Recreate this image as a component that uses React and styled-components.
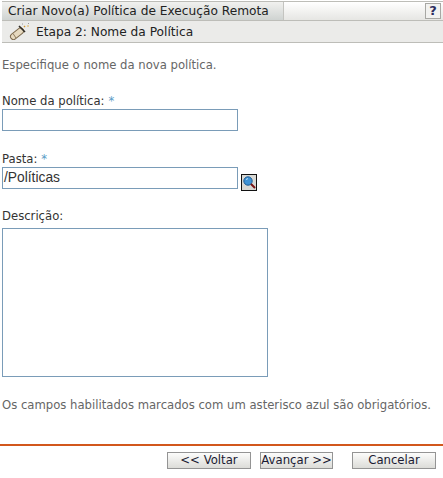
import React from 'react'
import styled, { createGlobalStyle } from 'styled-components'

const Global = createGlobalStyle`
  html, body { margin: 0; padding: 0; background: #fff; }
  body { font-family: "DejaVu Sans", Verdana, sans-serif; font-size: 11.65px; color: #333; }
`

const Page = styled.div`
  width: 443px;
  height: 478px;
  padding-top: 1px;
  box-sizing: border-box;
  overflow: hidden;
`

const Header = styled.div`
  margin: 0 0 0 2px;
  border-top: 1px solid #bdbdb8;
  border-bottom: 1px solid #bdbdb8;
`

const TabRow = styled.div`
  display: flex;
  height: 18px;
  border-bottom: 1px solid #bdbdb8;
  background: linear-gradient(#fff, #e6e6e3);
`

const Tab = styled.div`
  width: 282px;
  padding-left: 6px;
  box-sizing: border-box;
  font-size: 12.2px;
  line-height: 18px;
  color: #222;
  white-space: nowrap;
  background: linear-gradient(#f1f1ef, #cfd3d1);
  border-right: 1px solid #c4c4c0;
`

const HelpCell = styled.div`
  flex: 1;
  display: flex;
  justify-content: flex-end;
  align-items: center;
  padding-right: 2px;
`

const HelpButton = styled.div`
  width: 14px;
  height: 14px;
  border: 1px solid #a8a8a4;
  background: #f2f2f0;
  color: #2c2c5e;
  font: bold 13px/14px "DejaVu Sans", sans-serif;
  text-align: center;
`

const StepRow = styled.div`
  display: flex;
  align-items: center;
  gap: 5px;
  height: 21px;
  padding-left: 7px;
  background: #ebebe9;
  font-size: 12.2px;
  color: #222;
`

const Content = styled.div`
  padding: 15px 0 0 2px;
`

const Intro = styled.p`
  margin: 0 0 22px;
  line-height: 14px;
  color: #666;
`

const Field = styled.div`
  margin-bottom: ${p => p.$gap}px;
`

const Label = styled.div`
  line-height: 14px;
  margin-bottom: ${p => p.$gap || 1}px;
  color: #333;
`

const Star = styled.span`
  color: #5a9cc6;
  margin-left: 4px;
`

const InputRow = styled.div`
  display: flex;
  align-items: flex-end;
  gap: 3px;
`

const TextInput = styled.div`
  width: 236px;
  height: 22px;
  box-sizing: border-box;
  border: 1px solid #7a9cb8;
  padding-left: 1px;
  font: 13.8px/20px "Liberation Sans", Arial, sans-serif;
  color: #333;
`

const TextArea = styled.div`
  width: 266px;
  height: 149px;
  box-sizing: border-box;
  border: 1px solid #7a9cb8;
`

const SearchButton = styled.div`
  width: 16px;
  height: 17px;
  margin-bottom: -2px;
  box-sizing: border-box;
  border: 1px solid #111;
  background: #d8d8d4;
  display: flex;
`

const Note = styled.p`
  margin: 21px 0 0;
  line-height: 14px;
  color: #666;
  white-space: nowrap;
`

const Footer = styled.div`
  margin: 32px 0 0;
  border-top: 2px solid #d2571c;
  display: flex;
  padding: 6px 0 0 167px;
`

const Button = styled.button`
  height: 17px;
  width: ${p => p.$w}px;
  margin-right: ${p => p.$gap || 0}px;
  padding: 0;
  border: 1px solid #949494;
  border-radius: 0;
  background: linear-gradient(#fcfcfb, #dcdcd8);
  font: 11.7px/15px "DejaVu Sans", sans-serif;
  color: #1b1b33;
  white-space: nowrap;
`

const ScrollIcon = () => (
  <svg width="22" height="17" viewBox="0 0 22 17">
    <path d="M4.5 13.5 L11.5 8" stroke="#7d6a4e" strokeWidth="7" strokeLinecap="round" />
    <path d="M4.5 13.5 L11.5 8" stroke="#e6d9bf" strokeWidth="5" strokeLinecap="round" />
    <path d="M4 10.5 L7 15" stroke="#8d7a5c" strokeWidth="1" />
    <path d="M10 3 L16 9" stroke="#2f2a24" strokeWidth="1.6" />
    <path d="M15 4 L16 3" stroke="#d4982c" strokeWidth="1.4" />
    <path d="M18 3 L20 3" stroke="#e0b45a" strokeWidth="1" />
    <path d="M13 1 L14 1 M19 0.5 L20 0.5" stroke="#9a9a9a" strokeWidth="1" />
  </svg>
)

const SearchIcon = () => (
  <svg width="14" height="15" viewBox="0 0 14 15">
    <circle cx="6" cy="6" r="4.2" fill="#3f93d6" stroke="#1f5c93" strokeWidth="1" />
    <path d="M4 4.5 L6 3.6" stroke="#bfe2f8" strokeWidth="1" />
    <path d="M9 9 L13 13" stroke="#7a1212" strokeWidth="2" />
  </svg>
)

export default function App() {
  return (
    <Page>
      <Global />
      <Header>
        <TabRow>
          <Tab>Criar Novo(a) Política de Execução Remota</Tab>
          <HelpCell><HelpButton>?</HelpButton></HelpCell>
        </TabRow>
        <StepRow>
          <ScrollIcon />
          <span>Etapa 2: Nome da Política</span>
        </StepRow>
      </Header>
      <Content>
        <Intro>Especifique o nome da nova política.</Intro>
        <Field $gap={21}>
          <Label>Nome da política:<Star>*</Star></Label>
          <InputRow><TextInput /></InputRow>
        </Field>
        <Field $gap={20}>
          <Label>Pasta:<Star>*</Star></Label>
          <InputRow>
            <TextInput>/Políticas</TextInput>
            <SearchButton><SearchIcon /></SearchButton>
          </InputRow>
        </Field>
        <Field $gap={0}>
          <Label $gap={5}>Descrição:</Label>
          <TextArea />
        </Field>
        <Note>Os campos habilitados marcados com um asterisco azul são obrigatórios.</Note>
      </Content>
      <Footer>
        <Button $w={84} $gap={9}>&lt;&lt; Voltar</Button>
        <Button $w={73} $gap={19}>Avançar &gt;&gt;</Button>
        <Button $w={84}>Cancelar</Button>
      </Footer>
    </Page>
  )
}
